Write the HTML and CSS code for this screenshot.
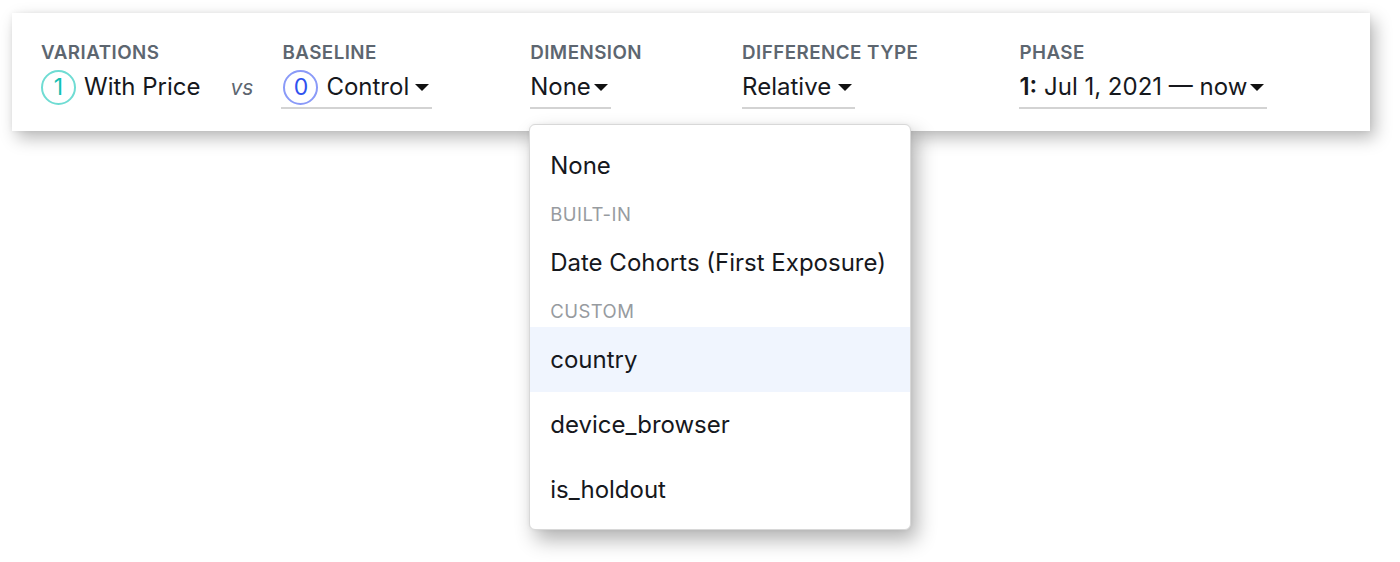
FILE: index.html
```html
<!DOCTYPE html>
<html>
<head>
<meta charset="utf-8">
<link rel="stylesheet" href="styles.css">
</head>
<body>
<div class="panel">
  <div class="group">
    <div class="label">Variations</div>
    <div class="value plain">
      <span class="badge badge-teal">1</span>
      <span>With Price</span>
    </div>
  </div>
  <div class="vs">vs</div>
  <div class="group baseline">
    <div class="label">Baseline</div>
    <div class="value toggle toggle-wide">
      <span class="badge badge-blue">0</span>
      <span>Control</span>
      <span class="caret caret-wide"></span>
    </div>
  </div>
  <div class="group dimension">
    <div class="label">Dimension</div>
    <div class="value toggle">
      <span>None</span>
      <span class="caret"></span>
    </div>
    <div class="menu">
      <div class="item">None</div>
      <div class="header">Built-in</div>
      <div class="item">Date Cohorts (First Exposure)</div>
      <div class="header">Custom</div>
      <div class="item active">country</div>
      <div class="item">device_browser</div>
      <div class="item">is_holdout</div>
    </div>
  </div>
  <div class="group difference">
    <div class="label">Difference Type</div>
    <div class="value toggle">
      <span>Relative</span>
      <span class="caret caret-mid"></span>
    </div>
  </div>
  <div class="group">
    <div class="label">Phase</div>
    <div class="value toggle">
      <span><b>1:</b> Jul 1, 2021 — now</span>
      <span class="caret"></span>
    </div>
  </div>
</div>
</body>
</html>
```
FILE: styles.css
```css
html, body {
  margin: 0;
  padding: 0;
  background: #ffffff;
}
body {
  font-family: Inter, "Noto Sans", "Liberation Sans", sans-serif;
  color: #16181d;
  width: 1400px;
  height: 562px;
  overflow: hidden;
}
.panel {
  margin: 13px 0 0 12px;
  width: 1358px;
  height: 118px;
  box-sizing: border-box;
  background: #fff;
  padding: 28px 0 0 29px;
  display: flex;
  align-items: flex-start;
  box-shadow: 5px 7px 16px rgba(0, 0, 0, 0.28), 0 0 5px rgba(0, 0, 0, 0.06);
}
.group {
  display: flex;
  flex-direction: column;
  align-items: flex-start;
  position: relative;
}
.label {
  font-size: 18.8px;
  font-weight: 600;
  letter-spacing: 0.45px;
  text-transform: uppercase;
  color: #5d6670;
  line-height: 24px;
  margin-left: 0;
}
.value {
  display: flex;
  align-items: center;
  font-size: 24px;
  line-height: 38px;
  height: 38px;
  margin-top: 3px;
}
.toggle {
  border-bottom: 2px solid #d3d3d3;
  padding: 0 3px 1px 0;
}
.toggle-wide {
  padding-left: 2px;
  margin-left: -1px;
}
.plain {
  padding-bottom: 3px;
}
.badge {
  box-sizing: border-box;
  width: 35px;
  height: 35px;
  border-radius: 50%;
  display: inline-flex;
  align-items: center;
  justify-content: center;
  font-size: 23px;
  line-height: 1;
  margin-right: 8px;
}
.badge-teal {
  border: 2.5px solid #6fdcd3;
  color: #14c0b2;
}
.badge-blue {
  border: 2.5px solid #8a9af8;
  color: #2f52ef;
}
.caret {
  width: 0;
  height: 0;
  border-left: 7px solid transparent;
  border-right: 7px solid transparent;
  border-top: 7px solid #111;
  margin-left: 3px;
  margin-top: 1px;
}
.caret-wide {
  margin-left: 6px;
}
.caret-mid {
  margin-left: 7px;
}
.vs {
  font-size: 21px;
  font-style: italic;
  color: #5d6670;
  margin: 35px 29px 0 30px;
  line-height: 24px;
}
.baseline {
  margin-right: 98px;
}
.dimension {
  margin-right: 100px;
}
.difference {
  margin-right: 101px;
}
b {
  font-weight: 600;
}
.menu {
  position: absolute;
  top: 83px;
  left: -1px;
  width: 382px;
  height: 406px;
  box-sizing: border-box;
  background: #fff;
  border: 1px solid #d8d8d8;
  border-radius: 6px;
  padding: 8px 0;
  box-shadow: 6px 10px 20px rgba(0, 0, 0, 0.3), 0 0 4px rgba(0, 0, 0, 0.05);
  z-index: 5;
}
.item {
  height: 65px;
  line-height: 65px;
  font-size: 24px;
  padding-left: 20px;
  color: #16181d;
  white-space: nowrap;
}
.item.active {
  background: #f0f5fe;
}
.header {
  height: 32px;
  line-height: 32px;
  font-size: 18.5px;
  letter-spacing: 0.45px;
  text-transform: uppercase;
  color: #979ba0;
  padding-left: 20px;
}
```
